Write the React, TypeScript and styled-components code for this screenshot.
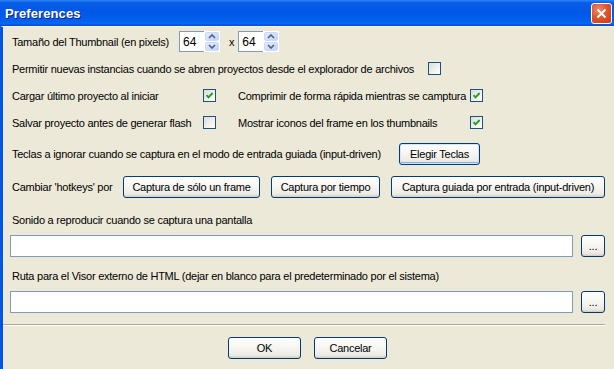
import styled, { createGlobalStyle } from 'styled-components';

const GlobalStyle = createGlobalStyle`
  html, body {
    margin: 0;
    padding: 0;
    background: #ece9d8;
  }
  body {
    font-family: 'Liberation Sans', Arial, sans-serif;
    font-size: 11px;
    letter-spacing: -0.25px;
    color: #000;
  }
`;

const Window = styled.div`
  display: flex;
  flex-direction: column;
  width: 614px;
  height: 369px;
  overflow: hidden;
`;

const TitleBar = styled.div`
  display: flex;
  align-items: center;
  justify-content: space-between;
  height: 26px;
  padding: 0 2px 0 5px;
  box-sizing: border-box;
  background: linear-gradient(
    to bottom,
    #2f86f6 0%,
    #0a5ee8 10%,
    #0058e6 45%,
    #0360ee 80%,
    #0a66f2 90%,
    #0048d0 100%
  );
`;

const Title = styled.span`
  font-family: 'Liberation Sans', Arial, sans-serif;
  font-size: 13px;
  font-weight: 700;
  color: #fff;
  text-shadow: 1px 1px 0 #0a1f8f;
  letter-spacing: 0.1px;
`;

const CloseButton = styled.div`
  display: grid;
  place-items: center;
  width: 21px;
  height: 21px;
  box-sizing: border-box;
  border: 1px solid #fff;
  border-radius: 3px;
  background: radial-gradient(circle at 35% 30%, #f08a6a 0%, #e0552e 45%, #c63b14 100%);
`;

const Body = styled.div`
  flex: 1;
  display: flex;
  flex-direction: column;
  background: #ece9d8;
  border-left: 3px solid #0055e5;
  border-top: 1px solid #f6f4ec;
  padding: 1px 9px 0 7px;
`;

const Row = styled.div<{ $h?: number; $mt?: number }>`
  display: flex;
  align-items: center;
  height: ${(p) => p.$h ?? 27}px;
  margin-top: ${(p) => p.$mt ?? 0}px;
`;

const Label = styled.span<{ $w?: number }>`
  display: inline-block;
  margin-left: 2px;
  white-space: nowrap;
  ${(p) => (p.$w ? `width: ${p.$w}px; flex: none;` : '')}
`;

const Gap = styled.span<{ $w: number }>`
  display: inline-block;
  width: ${(p) => p.$w}px;
  flex: none;
`;

const NumberBox = styled.div`
  display: flex;
  align-items: center;
  width: 25px;
  height: 21px;
  box-sizing: border-box;
  border: 1px solid #7f9db9;
  border-right: none;
  background: #fff;
  padding-left: 3px;
  font-size: 12px;
  letter-spacing: 0;
`;

const Spinner = styled.div`
  display: flex;
  flex-direction: column;
  width: 16px;
  height: 21px;
  box-sizing: border-box;
  border: 1px solid #fff;
  background: #fff;
  gap: 1px;
`;

const SpinHalf = styled.div`
  flex: 1;
  display: grid;
  place-items: center;
  border-radius: 2px;
  background: linear-gradient(to bottom right, #e3ebfd, #c2d2f8);
  border: 1px solid #cbd9fc;
`;

const Times = styled.span`
  margin: 0 4px 0 9px;
`;

const Box = styled.div`
  display: grid;
  place-items: center;
  width: 13px;
  height: 13px;
  flex: none;
  box-sizing: border-box;
  border: 1px solid #1c5180;
  background: linear-gradient(135deg, #dcdcd7 0%, #f2f2ee 60%, #ffffff 100%);
`;

const XpButton = styled.div<{ $w: number; $focus?: boolean }>`
  display: flex;
  align-items: center;
  justify-content: center;
  flex: none;
  width: ${(p) => p.$w}px;
  height: 22px;
  box-sizing: border-box;
  border: 1px solid #003c74;
  border-radius: 3px;
  background: linear-gradient(to bottom, #ffffff 0%, #f6f5f0 50%, #ecebe5 85%, #d6d0c5 100%);
  box-shadow: ${(p) =>
    p.$focus
      ? 'inset 0 0 0 1px #cee7ff, inset 0 -1px 0 1px #89adeb'
      : 'inset 0 -1px 0 #d6d0c5'};
  white-space: nowrap;
`;

const FieldRow = styled.div<{ $mt: number }>`
  display: flex;
  align-items: center;
  gap: 8px;
  height: 22px;
  margin-top: ${(p) => p.$mt}px;
`;

const TextField = styled.div`
  flex: 1;
  height: 22px;
  box-sizing: border-box;
  border: 1px solid #7f9db9;
  background: #fff;
`;

const Separator = styled.div`
  height: 0;
  margin: 11px 0 0 -7px;
  border-top: 1px solid #aca899;
  border-bottom: 1px solid #fff;
`;

const Footer = styled.div`
  display: flex;
  justify-content: center;
  gap: 13px;
  margin-top: 11px;
`;

function Check({ checked }: { checked?: boolean }) {
  return (
    <Box>
      {checked && (
        <svg width="9" height="9" viewBox="0 0 9 9">
          <polyline points="1.5,4.2 3.5,6.4 7.6,2" fill="none" stroke="#21a121" strokeWidth="1.9" />
        </svg>
      )}
    </Box>
  );
}

function Arrow({ up }: { up?: boolean }) {
  return (
    <svg width="8" height="5" viewBox="0 0 8 5">
      <polyline
        points={up ? '1,4 4,1 7,4' : '1,1 4,4 7,1'}
        fill="none"
        stroke="#4d6185"
        strokeWidth="1.6"
      />
    </svg>
  );
}

function SpinBox({ value }: { value: string }) {
  return (
    <>
      <NumberBox>{value}</NumberBox>
      <Spinner>
        <SpinHalf>
          <Arrow up />
        </SpinHalf>
        <SpinHalf>
          <Arrow />
        </SpinHalf>
      </Spinner>
    </>
  );
}

export default function App() {
  return (
    <>
      <GlobalStyle />
      <Window>
        <TitleBar>
          <Title>Preferences</Title>
          <CloseButton>
            <svg width="11" height="11" viewBox="0 0 11 11">
              <path d="M1.5 1.5 L9.5 9.5 M9.5 1.5 L1.5 9.5" stroke="#fff" strokeWidth="2" />
            </svg>
          </CloseButton>
        </TitleBar>

        <Body>
          <Row>
            <Label $w={167}>Tamaño del Thumbnail (en pixels)</Label>
            <SpinBox value="64" />
            <Times>x</Times>
            <SpinBox value="64" />
          </Row>

          <Row>
            <Label $w={416}>
              Permitir nuevas instancias cuando se abren proyectos desde el explorador de archivos
            </Label>
            <Check />
          </Row>

          <Row>
            <Label $w={191}>Cargar último proyecto al iniciar</Label>
            <Check checked />
            <Gap $w={20} />
            <Label $w={232}>Comprimir de forma rápida mientras se camptura</Label>
            <Check checked />
          </Row>

          <Row>
            <Label $w={191}>Salvar proyecto antes de generar flash</Label>
            <Check />
            <Gap $w={20} />
            <Label $w={232}>Mostrar iconos del frame en los thumbnails</Label>
            <Check checked />
          </Row>

          <Row $mt={4}>
            <Label $w={387}>Teclas a ignorar cuando se captura en el modo de entrada guiada (input-driven)</Label>
            <XpButton $w={81} $focus>
              Elegir Teclas
            </XpButton>
          </Row>

          <Row $mt={6}>
            <Label $w={111}>Cambiar 'hotkeys' por</Label>
            <XpButton $w={137}>Captura de sólo un frame</XpButton>
            <Gap $w={11} />
            <XpButton $w={109}>Captura por tiempo</XpButton>
            <Gap $w={11} />
            <XpButton $w={214}>Captura guiada por entrada (input-driven)</XpButton>
          </Row>

          <Row $h={16} $mt={12}>
            <Label>Sonido a reproducir cuando se captura una pantalla</Label>
          </Row>
          <FieldRow $mt={7}>
            <TextField />
            <XpButton $w={24}>...</XpButton>
          </FieldRow>

          <Row $h={16} $mt={11}>
            <Label>Ruta para el Visor externo de HTML (dejar en blanco para el predeterminado por el sistema)</Label>
          </Row>
          <FieldRow $mt={7}>
            <TextField />
            <XpButton $w={24}>...</XpButton>
          </FieldRow>

          <Separator />

          <Footer>
            <XpButton $w={73}>OK</XpButton>
            <XpButton $w={73}>Cancelar</XpButton>
          </Footer>
        </Body>
      </Window>
    </>
  );
}
